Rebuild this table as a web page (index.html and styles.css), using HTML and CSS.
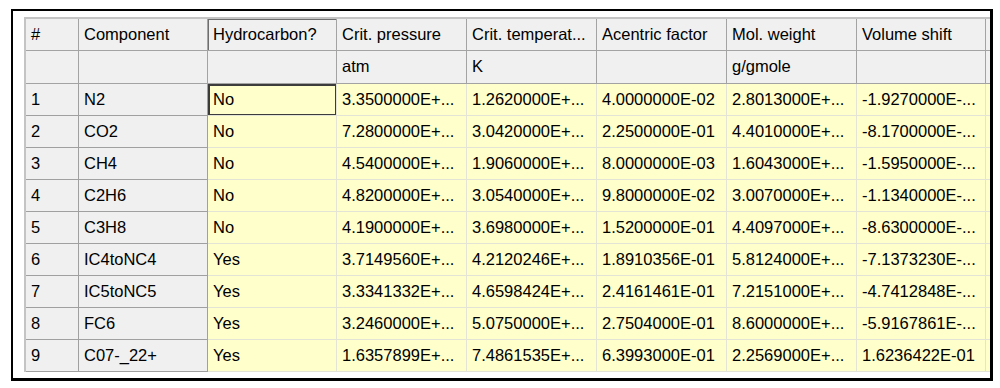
FILE: index.html
```html
<!DOCTYPE html>
<html>
<head>
<meta charset="utf-8">
<link rel="stylesheet" href="styles.css">
</head>
<body>
<div class="frame">
  <div class="grid">
    <div class="c h">#</div><div class="c h">Component</div><div class="c h hsel">Hydrocarbon?</div><div class="c h">Crit. pressure</div><div class="c h">Crit. temperat...</div><div class="c h">Acentric factor</div><div class="c h">Mol. weight</div><div class="c h">Volume shift</div><div class="c h"></div>
    <div class="c h u"></div><div class="c h u"></div><div class="c h u"></div><div class="c h u">atm</div><div class="c h u">K</div><div class="c h u"></div><div class="c h u">g/gmole</div><div class="c h u"></div><div class="c h u"></div>

    <div class="c g">1</div><div class="c g">N2</div><div class="c y sel">No</div><div class="c y">3.3500000E+...</div><div class="c y">1.2620000E+...</div><div class="c y">4.0000000E-02</div><div class="c y">2.8013000E+...</div><div class="c y">-1.9270000E-...</div><div class="c y"></div>
    <div class="c g">2</div><div class="c g">CO2</div><div class="c y">No</div><div class="c y">7.2800000E+...</div><div class="c y">3.0420000E+...</div><div class="c y">2.2500000E-01</div><div class="c y">4.4010000E+...</div><div class="c y">-8.1700000E-...</div><div class="c y"></div>
    <div class="c g">3</div><div class="c g">CH4</div><div class="c y">No</div><div class="c y">4.5400000E+...</div><div class="c y">1.9060000E+...</div><div class="c y">8.0000000E-03</div><div class="c y">1.6043000E+...</div><div class="c y">-1.5950000E-...</div><div class="c y"></div>
    <div class="c g">4</div><div class="c g">C2H6</div><div class="c y">No</div><div class="c y">4.8200000E+...</div><div class="c y">3.0540000E+...</div><div class="c y">9.8000000E-02</div><div class="c y">3.0070000E+...</div><div class="c y">-1.1340000E-...</div><div class="c y"></div>
    <div class="c g">5</div><div class="c g">C3H8</div><div class="c y">No</div><div class="c y">4.1900000E+...</div><div class="c y">3.6980000E+...</div><div class="c y">1.5200000E-01</div><div class="c y">4.4097000E+...</div><div class="c y">-8.6300000E-...</div><div class="c y"></div>
    <div class="c g">6</div><div class="c g">IC4toNC4</div><div class="c y">Yes</div><div class="c y">3.7149560E+...</div><div class="c y">4.2120246E+...</div><div class="c y">1.8910356E-01</div><div class="c y">5.8124000E+...</div><div class="c y">-7.1373230E-...</div><div class="c y"></div>
    <div class="c g">7</div><div class="c g">IC5toNC5</div><div class="c y">Yes</div><div class="c y">3.3341332E+...</div><div class="c y">4.6598424E+...</div><div class="c y">2.4161461E-01</div><div class="c y">7.2151000E+...</div><div class="c y">-4.7412848E-...</div><div class="c y"></div>
    <div class="c g">8</div><div class="c g">FC6</div><div class="c y">Yes</div><div class="c y">3.2460000E+...</div><div class="c y">5.0750000E+...</div><div class="c y">2.7504000E-01</div><div class="c y">8.6000000E+...</div><div class="c y">-5.9167861E-...</div><div class="c y"></div>
    <div class="c g">9</div><div class="c g">C07-_22+</div><div class="c y">Yes</div><div class="c y">1.6357899E+...</div><div class="c y">7.4861535E+...</div><div class="c y">6.3993000E-01</div><div class="c y">2.2569000E+...</div><div class="c y">1.6236422E-01</div><div class="c y"></div>
  </div>
</div>
</body>
</html>
```
FILE: styles.css
```css
html, body {
  margin: 0;
  padding: 0;
  background: #ffffff;
}

body {
  font-family: "Liberation Sans", Arial, sans-serif;
  font-size: 16.5px;
  color: #000;
}

.frame {
  box-sizing: border-box;
  margin: 9px 0 0 11px;
  width: 982px;
  height: 372px;
  border-top: 2px solid #000;
  border-left: 2px solid #000;
  border-right: 3px solid #000;
  border-bottom: 3px solid #000;
  padding: 6px 0 0 11px;
  overflow: hidden;
  background: #fff;
}

.grid {
  display: grid;
  grid-template-columns: 53px 129px 129px 130px 130px 130px 130px 129px 40px;
  grid-template-rows: 32px 33px repeat(9, 32px);
  border-top: 2px solid #c4c4c4;
  border-left: 2px solid #c4c4c4;
  width: max-content;
}

.c {
  box-sizing: border-box;
  display: flex;
  align-items: center;
  padding: 0 0 1px 5px;
  white-space: nowrap;
  overflow: hidden;
  border-right: 1px solid #a0a0a0;
  border-bottom: 1px solid #a0a0a0;
}

.h, .g {
  background: #f0f0f0;
}

.h {
  border-right-color: #a3a3a3;
  border-bottom-color: #a3a3a3;
}

.hsel {
  box-shadow: inset 1px 1px 0 #6e6e6e;
}

.y {
  background: #ffffcc;
  border-right-color: #e3e3d6;
  border-bottom-color: #e3e3d6;
}

.sel {
  box-shadow: inset 0 0 0 1px #3c3c3c, inset 1px 1px 0 1px #3c3c3c;
}
```
